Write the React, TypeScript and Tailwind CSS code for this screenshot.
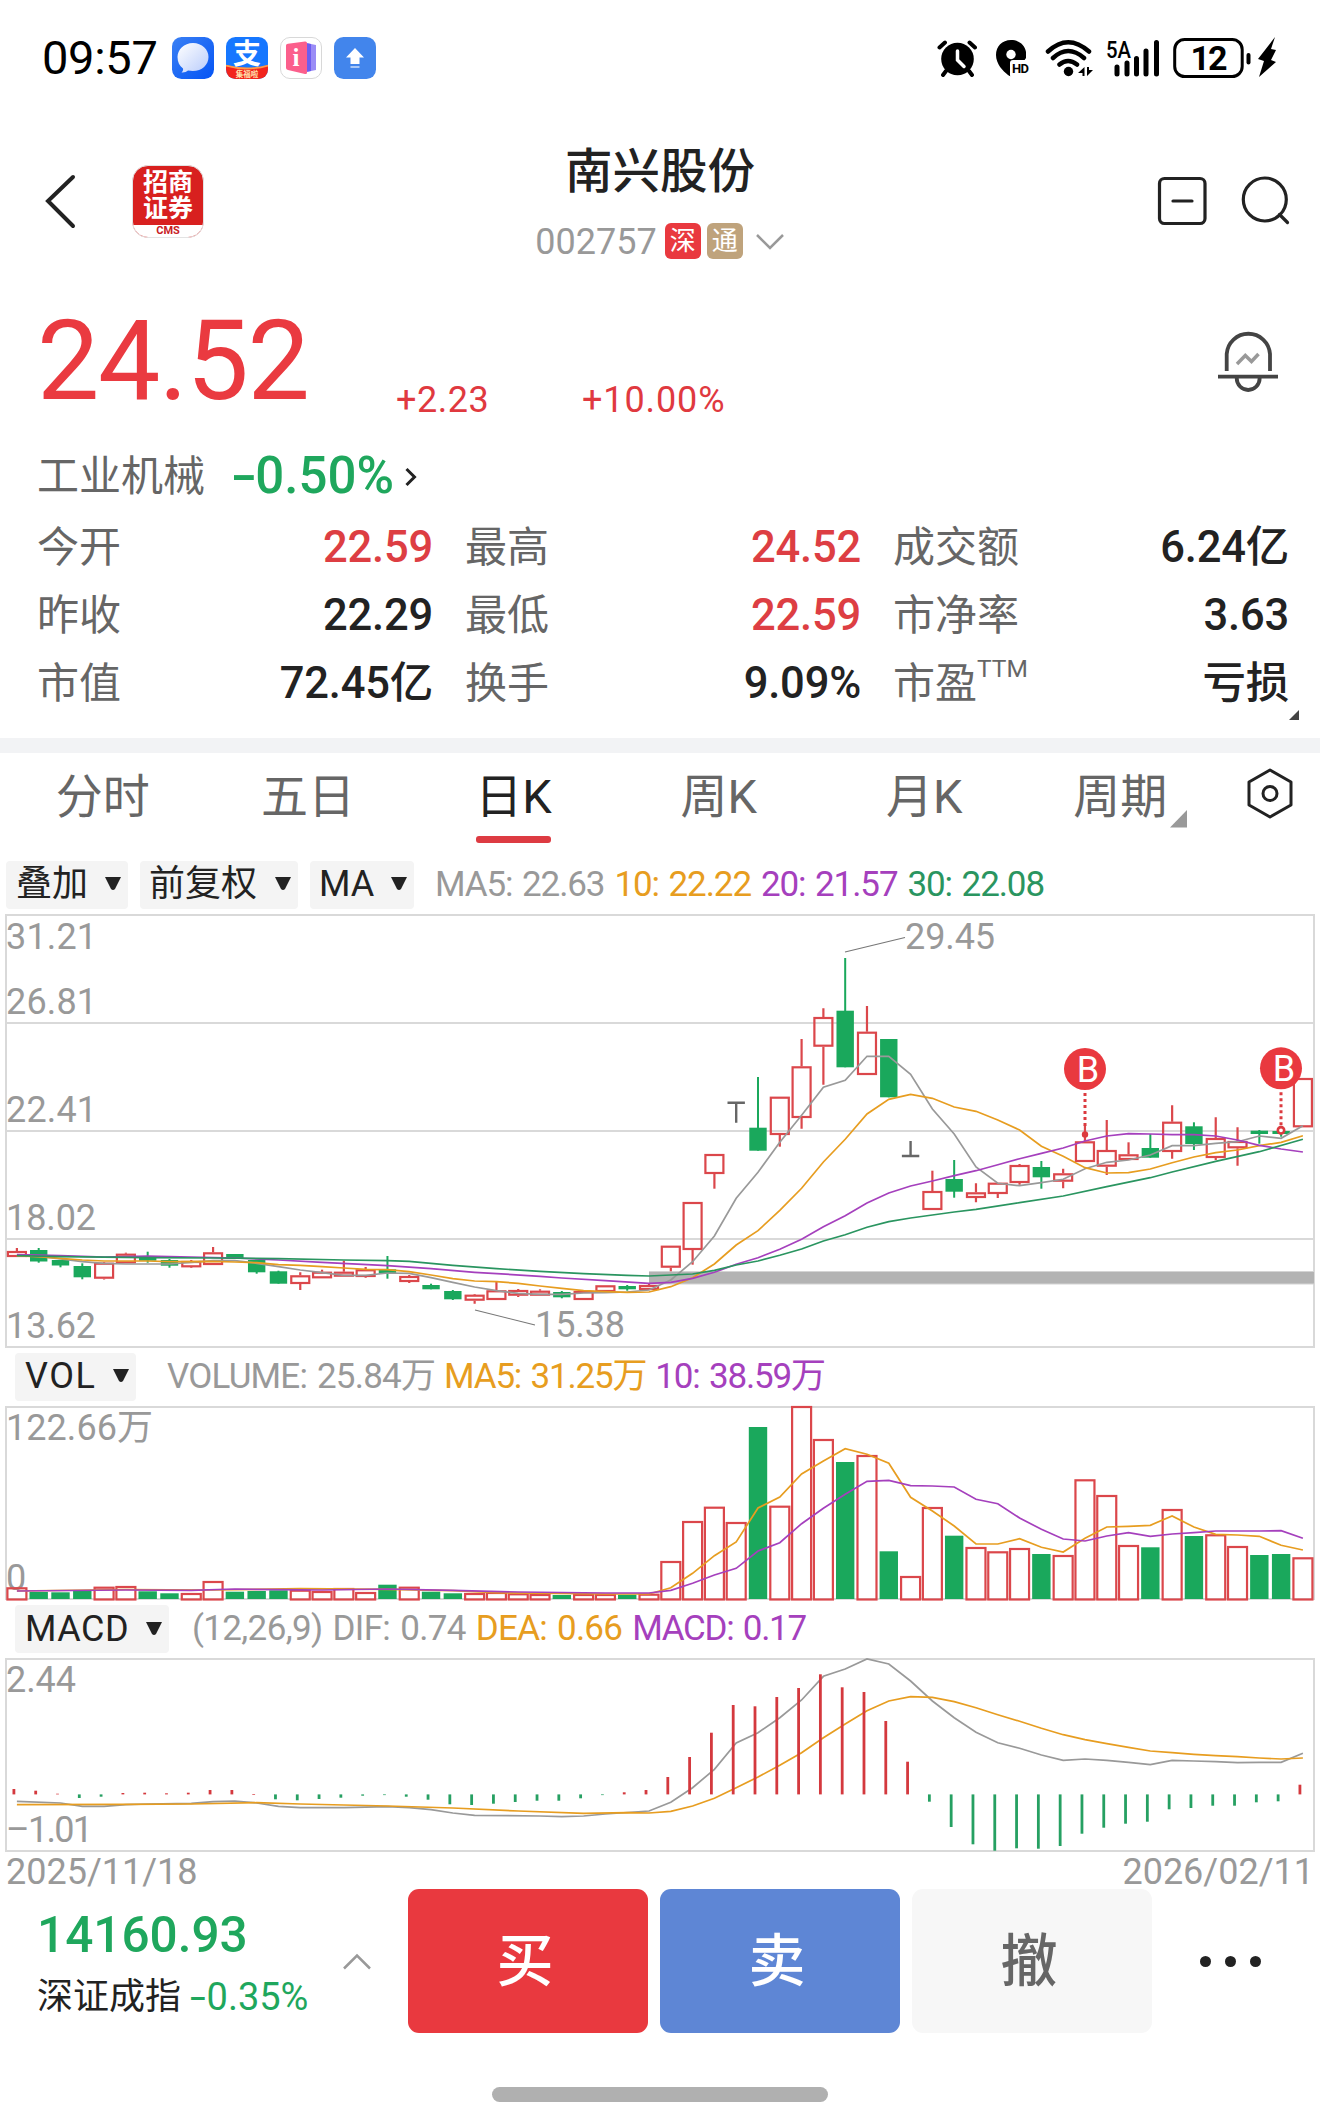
import type { ReactNode } from 'react'

type CandleKind = 'up' | 'down' | 'top' | 'bottom'

// [kind, high, body top, body bottom, low, volume top, macd]
type Day = [CandleKind, number, number, number, number, number, number]

const RED = '#db474b'
const GREEN = '#1aa85c'
const GRAY = '#999999'
const ORANGE = '#e79d20'
const PURPLE = '#a540bd'
const DARK_GREEN = '#2a9560'
const GRID = '#d9d9d9'

const days: Day[] = [
    ['up', 1248, 1251, 1257, 1257, 1587.3, 1789],
    ['down', 1248, 1250, 1261.5, 1262.7, 1592, 1790.7],
    ['down', 1260, 1260, 1265.5, 1267.3, 1592.3, 1793.7],
    ['down', 1263.3, 1266, 1277.3, 1279.3, 1590, 1798],
    ['up', 1262, 1262.7, 1278.7, 1279.5, 1586.7, 1796.7],
    ['up', 1252.7, 1253.7, 1263.3, 1263.3, 1586, 1793],
    ['down', 1251.7, 1257.7, 1260.7, 1262.7, 1591.3, 1792.7],
    ['down', 1259, 1260, 1265.7, 1267.7, 1593.3, 1793.3],
    ['up', 1260, 1261, 1267.3, 1268, 1593, 1792.7],
    ['up', 1247, 1252.3, 1265, 1265, 1581, 1790],
    ['down', 1254, 1254, 1258.7, 1258.7, 1591.7, 1790],
    ['down', 1260, 1260, 1272.3, 1273.7, 1591, 1794],
    ['down', 1270.7, 1271.3, 1283.7, 1283.7, 1590.3, 1799.3],
    ['up', 1272.3, 1275.3, 1284, 1290, 1589.7, 1800.3],
    ['up', 1269.7, 1271.7, 1278.3, 1278.3, 1591, 1799],
    ['up', 1260.7, 1271.7, 1276.7, 1276.7, 1588, 1797.7],
    ['up', 1267, 1269.3, 1277, 1277.7, 1592, 1795.7],
    ['down', 1256, 1269.3, 1273.3, 1278.7, 1584.7, 1795],
    ['up', 1275, 1276, 1282, 1283, 1586.7, 1796.7],
    ['down', 1283.7, 1285, 1289.3, 1289.3, 1591.7, 1799.7],
    ['down', 1290, 1291, 1299.3, 1300, 1593.3, 1804.3],
    ['up', 1294, 1294.7, 1300.7, 1303.7, 1593, 1805],
    ['up', 1282, 1290.3, 1300, 1300, 1592, 1803.7],
    ['up', 1289, 1290, 1295.7, 1297, 1593.3, 1802],
    ['up', 1289.3, 1290.7, 1295.7, 1295.7, 1594, 1800.7],
    ['down', 1291, 1292, 1297.3, 1298.3, 1595, 1800.7],
    ['up', 1291, 1291, 1300, 1300, 1594, 1798.3],
    ['up', 1285.3, 1285.3, 1292, 1292, 1594, 1794.7],
    ['down', 1285, 1286, 1289.3, 1290.7, 1594.7, 1792.3],
    ['up', 1284, 1285, 1290, 1290, 1593.7, 1790],
    ['up', 1245.7, 1245.7, 1267.7, 1271.3, 1561, 1777],
    ['up', 1202, 1202, 1250, 1264.7, 1521, 1757],
    ['up', 1154, 1154, 1174, 1188.7, 1506.7, 1732.7],
    ['top', 1102.7, 1102.7, 1102.7, 1122.7, 1522, 1705],
    ['down', 1077, 1127.7, 1150.7, 1150.7, 1427, 1706.3],
    ['up', 1096.7, 1096.7, 1135, 1146.7, 1505.7, 1697],
    ['up', 1039, 1066.3, 1118, 1128.7, 1406, 1688],
    ['up', 1008.3, 1017, 1046.7, 1084.7, 1439, 1674.3],
    ['down', 958, 1010.7, 1067.3, 1067.3, 1462, 1687.3],
    ['up', 1006, 1031.7, 1075, 1075, 1455, 1692],
    ['down', 1039, 1039, 1097.3, 1097.3, 1551.3, 1721],
    ['bottom', 1141, 1156, 1156, 1156, 1576, 1761.7],
    ['up', 1170.7, 1191, 1210, 1210, 1507, 1801.7],
    ['down', 1160, 1179, 1191.7, 1197.7, 1535.7, 1827],
    ['up', 1183.3, 1192.3, 1198, 1202.3, 1547, 1844.3],
    ['up', 1182.7, 1182.7, 1194, 1198, 1551.3, 1850.7],
    ['up', 1164, 1165, 1183, 1184.7, 1548, 1848.3],
    ['down', 1161, 1167, 1177.3, 1188.7, 1554, 1848.7],
    ['up', 1168.7, 1173.3, 1181.7, 1188.3, 1555, 1846],
    ['up', 1125, 1141.3, 1162, 1162, 1479.3, 1833.7],
    ['up', 1120, 1150, 1166.7, 1175, 1495, 1827.7],
    ['up', 1142.3, 1154.3, 1160, 1160, 1545, 1823.7],
    ['down', 1134, 1148, 1157.7, 1157.7, 1547.3, 1821.7],
    ['up', 1105.3, 1121.7, 1152, 1158.7, 1509, 1809.3],
    ['down', 1122.3, 1126.3, 1144, 1150, 1536, 1808],
    ['up', 1117.3, 1138, 1158, 1160, 1534.3, 1805.7],
    ['up', 1127.3, 1141, 1148.3, 1165.7, 1546, 1805.7],
    ['down', 1130, 1130.7, 1134, 1143.7, 1555, 1802.3],
    ['down', 1131, 1131, 1134, 1136.7, 1554, 1801.3],
    ['up', 1078, 1078, 1127.3, 1127.3, 1557.3, 1784.7],
]

const dayX = (i: number) => 16.9 + i * 21.797

// each line is "index:y" pairs, days between two pairs are interpolated by the polyline
const toPoints = (line: string) =>
    line
        .trim()
        .split(/\s+/)
        .map((pair) => {
            const [i, y] = pair.split(':').map(Number)
            return `${dayX(i).toFixed(1)},${y}`
        })
        .join(' ')

const ma5 = `0:1255.3 1:1256.3 2:1259 3:1261.7 4:1263.3 5:1264 7:1264 8:1262.3 9:1260.7 10:1260.7 11:1263.3 12:1266.7
13:1270 14:1272.7 15:1275.3 16:1275.3 17:1273 18:1273.3 19:1277.7 20:1282.3 21:1287 22:1290.7 23:1293.3 24:1294.3 25:1294.3
26:1293 27:1292.7 28:1292 29:1290 30:1280 31:1261.7 32:1236 33:1198.3 34:1172.3 35:1142.3 36:1115.3 37:1087.3 38:1080.3
39:1056.3 40:1056.3 41:1074.3 42:1109 43:1134 44:1167 45:1183.3 46:1185.7 47:1182.7 48:1179.3 49:1168.7 50:1162.3 51:1160
52:1155 53:1145.7 54:1145.7 55:1143.3 56:1141.7 57:1136 58:1138.3 59:1125.7`
const ma10 = `0:1256 1:1256.7 2:1258.3 3:1260 4:1261 6:1261 7:1261.7 9:1261.3 10:1262 11:1262.7 12:1264.7 13:1265.3 14:1266.7
15:1268 16:1269.3 17:1269.7 18:1271.7 19:1275 20:1278.7 21:1281 22:1281.7 23:1283.3 24:1286 25:1288.3 26:1290.7 27:1291.7
28:1292.3 29:1292 30:1286.7 31:1277.7 32:1264 33:1245 34:1230.7 35:1210.3 36:1188.3 37:1162 38:1139.3 39:1114 40:1099.3
41:1094.3 42:1098.3 43:1107 44:1111.3 45:1120 46:1130 47:1146.3 48:1156.3 49:1167.7 50:1173 51:1172.7 52:1169 53:1162.7
54:1157 55:1152.7 56:1150 57:1145.7 58:1142.3 59:1135.7`
const ma20 = `0:1254.7 2:1255.7 4:1257 6:1256 8:1257 10:1258 12:1260 14:1262.3 17:1265.7 19:1268.7 21:1272.3 24:1276.3 25:1278
27:1280.7 29:1283.3 30:1282.3 31:1278.3 32:1272.3 33:1264.3 34:1257.7 35:1249.3 36:1239.3 37:1226.7 38:1215.7 39:1203
40:1193 41:1186 42:1181 43:1175.7 44:1170.7 45:1164.7 46:1158.7 47:1153.3 48:1148 49:1141 50:1136 51:1133.7 52:1134
53:1134.7 54:1134.7 55:1136 56:1140 57:1145.3 58:1149 59:1152`
const ma30 = `0:1255.7 2:1256.7 6:1257.7 9:1258 12:1258.7 15:1260 17:1260.7 18:1261.3 20:1265.3 22:1268.7 24:1271.3 26:1273.7
28:1275.3 29:1276 31:1274 32:1270.3 33:1265 34:1261 35:1255.3 36:1249 37:1241 38:1234.7 39:1227.3 40:1221.7 41:1218 42:1215
43:1212 44:1209.3 46:1202.7 48:1196 50:1186.7 52:1177.7 53:1172 55:1161.3 57:1151.7 59:1139.3`
const vol5 = `0:1591 5:1589.5 9:1590 13:1588.7 17:1589.3 20:1590.7 22:1592.7 27:1594 29:1594 30:1587.7 31:1573.3 32:1555.7
33:1542 34:1508 35:1497 36:1474 37:1461 38:1448.7 39:1454.3 40:1463.3 41:1497.3 42:1511 43:1526 44:1544 45:1544 46:1538.7
47:1547.3 48:1552 49:1538.3 50:1527 51:1526.3 52:1525.3 53:1516 54:1527 55:1534.3 56:1535 57:1536.3 58:1545.3 59:1550`
const vol10 = `0:1591 5:1590 8:1590.3 10:1589 12:1589.7 14:1590 17:1589 20:1590.3 23:1592 27:1593 29:1593 30:1590.3 31:1583.3
32:1575 33:1568.3 34:1551 35:1542.7 36:1523.7 37:1508.3 38:1494.3 39:1481.3 40:1480.3 41:1485.7 42:1486 43:1487 44:1499.3
45:1503.7 46:1518 47:1529.3 48:1539 49:1541 50:1536 51:1532.7 52:1536.3 53:1534 54:1532.7 55:1531 57:1531 58:1530.7 59:1538.3`
const dif = `0:1801.3 2:1803 3:1806.3 4:1806.3 5:1804.7 6:1804 8:1803.3 9:1801.7 10:1801 11:1803 12:1806.3 13:1807.7
15:1807.7 17:1806.7 18:1807.7 19:1809.7 20:1813 21:1815.3 24:1816 25:1816.7 26:1816 27:1814 29:1811 30:1802.3 31:1787.7
32:1769.3 33:1743 34:1732.7 35:1717.7 36:1700 37:1676.3 38:1669 39:1659 40:1664 41:1681 42:1701 43:1717.7 44:1732.3
45:1742.7 46:1748.3 47:1755 48:1760.3 49:1759 50:1760.3 51:1762.3 52:1764.7 53:1760.3 54:1761 55:1761.7 56:1762.7
57:1762.3 58:1762.3 59:1753.3`
const dea = `0:1804.7 5:1804.3 8:1804 11:1802.7 13:1804 17:1806 20:1808 23:1811 26:1813.3 28:1812.7 29:1813 30:1811.3
31:1806 32:1798.3 33:1787.7 34:1777 35:1765.3 36:1752.7 37:1737.7 38:1724 39:1710.7 40:1701 41:1696.7 42:1697.3 43:1701.7
44:1707.7 45:1714.7 46:1721.3 47:1728.3 48:1734.7 49:1739.7 50:1743.7 51:1747.3 52:1751 53:1752.7 54:1754.3 55:1755.7
56:1756.7 57:1758 58:1759 59:1758`

function Line({ data, color }: { data: string; color: string }) {
    return <polyline points={toPoints(data)} fill="none" stroke={color} strokeWidth="1.7" />
}

function Label({ x, y, width, children }: { x: number; y: number; width: number; children: ReactNode }) {
    return (
        <text x={x} y={y} textLength={width} fontSize="36" fill={GRAY}>
            {children}
        </text>
    )
}

function Candle({ day, x }: { day: Day; x: number }) {
    const [kind, high, top, bottom, low] = day
    if (kind === 'top' || kind === 'bottom') {
        return <path d={`M${x - 8.7} ${top}h17.4M${x} ${high}V${low}`} stroke="#666" strokeWidth="2.4" fill="none" />
    }
    if (kind === 'down') {
        return (
            <g fill={GREEN}>
                <rect x={x - 1} y={high} width="2" height={low - high} />
                <rect x={x - 8.7} y={top} width="17.4" height={bottom - top} />
            </g>
        )
    }
    return (
        <g stroke={RED} strokeWidth="2.2" fill="none">
            <path d={`M${x} ${high}V${top}M${x} ${bottom}V${low}`} />
            <rect x={x - 9} y={top + 1} width="18" height={bottom - top - 2} />
        </g>
    )
}

function BuyMark({ x, y }: { x: number; y: number }) {
    return (
        <g>
            <path d={`M${x} ${y + 24}V1126`} stroke="#dc3a3f" strokeWidth="3" strokeDasharray="3 3" />
            <circle cx={x} cy={y} r="21" fill="#e9393f" />
            <text x={x + 3} y={y + 13} fontSize="36" fill="#fff" textAnchor="middle">B</text>
        </g>
    )
}

function PriceChart() {
    return (
        <svg className="block" width="1320" height="434" viewBox="0 914 1320 434">
            <g stroke={GRID} strokeWidth="2" fill="none">
                <rect x="6" y="915" width="1308" height="432" />
                <path d="M6 1023H1314M6 1131H1314M6 1239H1314" />
            </g>
            <rect x="649" y="1271" width="665" height="13.5" fill="#d4d4d4" />
            <rect x="649" y="1272" width="665" height="11.5" fill="#b3b3b3" />
            <Label x={6} y={948.5} width={91}>31.21</Label>
            <Label x={6} y={1014} width={91}>26.81</Label>
            <Label x={6} y={1122} width={91}>22.41</Label>
            <Label x={6} y={1230} width={90}>18.02</Label>
            <Label x={6} y={1338} width={90}>13.62</Label>
            {days.map((day, i) => (
                <Candle key={i} day={day} x={dayX(i)} />
            ))}
            <Line data={ma5} color={GRAY} />
            <Line data={ma10} color={ORANGE} />
            <Line data={ma20} color={PURPLE} />
            <Line data={ma30} color={DARK_GREEN} />
            <path d="M845 952L905 937.5M475 1310L535 1325" stroke="#777" strokeWidth="1.2" />
            <Label x={905} y={949} width={90}>29.45</Label>
            <Label x={535} y={1337} width={90}>15.38</Label>
            <BuyMark x={1085} y={1069} />
            <circle cx="1085" cy="1134.5" r="3.2" fill="#dc3a3f" />
            <BuyMark x={1281} y={1068.3} />
            <circle cx="1281" cy="1130.3" r="3.2" fill="#fff" stroke="#dc3a3f" strokeWidth="2.6" />
        </svg>
    )
}

function VolumeChart() {
    return (
        <svg className="block" width="1320" height="196" viewBox="0 1405 1320 196">
            <rect x="6" y="1407" width="1308" height="192" stroke={GRID} strokeWidth="2" fill="none" />
            <Label x={6} y={1440} width={147}>122.66万</Label>
            <Label x={6} y={1590} width={20}>0</Label>
            {days.map((day, i) =>
                day[0] === 'down' ? (
                    <rect key={i} x={dayX(i) - 9.2} y={day[5]} width="18.4" height={1599 - day[5]} fill={GREEN} />
                ) : (
                    <rect
                        key={i}
                        x={dayX(i) - 9.5}
                        y={day[5] + 1}
                        width="19"
                        height={1598.5 - day[5]}
                        stroke={RED}
                        strokeWidth="2.2"
                        fill="none"
                    />
                ),
            )}
            <Line data={vol5} color={ORANGE} />
            <Line data={vol10} color={PURPLE} />
        </svg>
    )
}

function MacdChart() {
    return (
        <svg className="block" width="1320" height="195" viewBox="0 1657 1320 195">
            <rect x="6" y="1659" width="1308" height="192" stroke={GRID} strokeWidth="2" fill="none" />
            <Label x={6} y={1692} width={70}>2.44</Label>
            <Label x={6} y={1842} width={87}>–1.01</Label>
            <Line data={dif} color={GRAY} />
            <Line data={dea} color={ORANGE} />
            {days.map((day, i) => (
                <rect
                    key={i}
                    x={dayX(i) - 4.4}
                    y={Math.min(day[6], 1794.4)}
                    width="2.8"
                    height={Math.max(Math.abs(day[6] - 1794.4), 0.7)}
                    fill={day[6] < 1794.4 ? '#d4393e' : '#26a062'}
                />
            ))}
        </svg>
    )
}

function Pill({ className, children }: { className: string; children: ReactNode }) {
    return (
        <button className={`flex h-12 items-center justify-between rounded-[4px] bg-[#f4f4f4] pr-[7px] text-[36px] leading-none text-[#222] ${className}`}>
            <span className="-mt-px whitespace-nowrap">{children}</span>
            <svg className="-mt-[2px]" width="16" height="13" viewBox="0 0 16 13">
                <path d="M0 0H16L10 12Q8 14 6 12Z" fill="#222" />
            </svg>
        </button>
    )
}

function Stat({ label, value, sup, red }: { label: string; value: string; sup?: string; red?: boolean }) {
    return (
        <div className="flex h-[68px] items-center justify-between text-[42px] leading-none">
            <span className="flex text-[#666]">
                {label}
                {sup && <span className="-mt-[6px] text-[24.5px] leading-none">{sup}</span>}
            </span>
            <span className={`text-[43.5px] font-medium tracking-[-0.2px] ${red ? 'text-[#dd3e43]' : 'text-[#222]'}`}>{value}</span>
        </div>
    )
}

function AppIcons() {
    return (
        <div className="ml-[14px] flex gap-3">
            <svg width="42" height="42" viewBox="0 0 42 42">
                <defs>
                    <linearGradient id="msg" x1="0" y1="0" x2="1" y2="1">
                        <stop offset="0" stopColor="#3a80f4" />
                        <stop offset="1" stopColor="#0454f5" />
                    </linearGradient>
                    <linearGradient id="bubble" x1="0" y1="0" x2="1" y2="1">
                        <stop offset="0" stopColor="#fff" />
                        <stop offset="1" stopColor="#b9ccfb" />
                    </linearGradient>
                </defs>
                <rect width="42" height="42" rx="9.5" fill="url(#msg)" />
                <path d="M21 6C12 6 5.5 12.500 5.500 20C5.500 25 7.500 29 11 31.500C11.500 33 10.500 34.500 9.500 35.500C12 35.800 14.500 35 16 33.600C28 36 36.500 29 36.500 20C36.500 12.500 30 6 21 6Z" fill="url(#bubble)" />
            </svg>
            <svg width="42" height="42" viewBox="0 0 42 42">
                <clipPath id="pay"><rect width="42" height="42" rx="9.500" /></clipPath>
                <g clipPath="url(#pay)">
                    <rect width="42" height="42" fill="#1677ff" />
                    <path d="M0 28Q21 34 42 28V42H0Z" fill="#f2231c" />
                    <path d="M0 28.500Q21 34.500 42 28.500" stroke="#ff9b4a" strokeWidth="1.800" fill="none" />
                </g>
                <text x="21" y="26.500" fontSize="28" fontWeight="700" fill="#fff" textAnchor="middle">支</text>
                <text x="21" y="40" fontSize="7.500" fontWeight="700" fill="#ffe3b0" textAnchor="middle">集福啦</text>
            </svg>
            <svg width="42" height="42" viewBox="0 0 42 42">
                <rect x="0.500" y="0.500" width="41" height="41" rx="9.500" fill="#fff" stroke="#d8d8d8" />
                <path d="M26 6L36 8V33L26 35Z" fill="#9a8cf6" />
                <path d="M26 6L31 7V34L26 35Z" fill="#6d5df0" />
                <path d="M6 8.500Q6 7 8 6.700L25 4.500Q27 4.300 27 6V35.500Q27 37.500 25 37L8 33Q6 32.500 6 31Z" fill="#fb5f8c" />
                <text x="16" y="29" fontFamily="Liberation Serif" fontSize="25" fontWeight="700" fill="#fff" textAnchor="middle">i</text>
            </svg>
            <svg width="42" height="42" viewBox="0 0 42 42">
                <rect width="42" height="42" rx="9.500" fill="#4285ec" />
                <path d="M21 11L30 20.500H25.500V27H16.500V20.500H12Z" fill="#fff" />
                <path d="M16.500 30H25.500" stroke="#a9c8f8" strokeWidth="2" />
            </svg>
        </div>
    )
}

function StatusIcons() {
    return (
        <div className="ml-auto flex items-center">
            <svg width="40" height="40" viewBox="937 38 40 40">
                <circle cx="957.500" cy="59" r="16.300" />
                <path d="M939.500 47.500L945 42.500M975 47.500L969.500 42.500M946 71L943 75M969 71L972 75" stroke="#000" strokeWidth="4" strokeLinecap="round" />
                <path d="M957.500 51V60L964 66.500" stroke="#fff" strokeWidth="3.500" fill="none" strokeLinecap="round" />
            </svg>
            <svg className="ml-[17px]" width="37" height="40" viewBox="994 38 37 40">
                <path d="M1011 40C1002 40 996 46.500 996 55C996 64 1003 71 1008 75Q1011 77.500 1014 75L1026 58V52C1025 45 1019 40 1011 40Z" />
                <circle cx="1011" cy="54.500" r="4.700" fill="#fff" />
                <rect x="1010" y="60" width="21" height="18" rx="3" fill="#fff" />
                <text x="1012" y="72.500" fontSize="13" fontWeight="700" textLength="17">HD</text>
            </svg>
            <svg className="ml-[13px]" width="50" height="40" viewBox="1044 38 50 40">
                <path d="M1048 51.500Q1068 33 1089 51.500M1053 58Q1068 44 1084 58M1059.500 64.500Q1068 57.500 1077 64.500" stroke="#000" strokeWidth="4.500" fill="none" strokeLinecap="round" />
                <circle cx="1068.500" cy="71.500" r="4.700" />
                <path d="M1084.500 67V76H1082.500V73L1078 73ZM1087 76V67H1089V70L1093 70Z" />
            </svg>
            <svg className="ml-[10px]" width="58" height="52" viewBox="1104 32 58 52">
                <text x="1106" y="57.500" fontSize="24" fontWeight="500" textLength="25" lengthAdjust="spacingAndGlyphs">5A</text>
                <path d="M1117 67V74M1127 63V74M1136.500 58.500V74M1146 51V74M1156.500 42.500V74" stroke="#000" strokeWidth="5" strokeLinecap="round" />
            </svg>
            <svg className="ml-[10px]" width="106" height="44" viewBox="1172 37 106 44">
                <rect x="1174.700" y="40.500" width="67.500" height="37" rx="10" fill="none" stroke="#000" strokeWidth="3" />
                <text x="1209" y="71" fontSize="34" fontWeight="700" textAnchor="middle" textLength="37">12</text>
                <rect x="1246.500" y="54" width="4" height="11.500" rx="2" />
                <path d="M1275 38L1258 60L1264 62L1259 78L1276 63L1271 61L1276 51L1271 50Z" />
            </svg>
        </div>
    )
}

function Header() {
    return (
        <header className="flex h-[170px] items-center justify-between pl-[44px] pr-[30px]">
            <div className="flex w-[220px] items-center">
                <svg width="32" height="56" viewBox="44 173 32 56">
                    <path d="M73 177L48 201L73 226" fill="none" stroke="#222" strokeWidth="4" strokeLinecap="round" />
                </svg>
                <div className="ml-[56px] flex h-[73px] w-[72px] flex-col items-center overflow-hidden rounded-[16px] border border-[#e3e3e3] bg-[#d8201f] pt-[4px] text-[25px] leading-[26px] font-bold text-white">
                    <span>招商</span>
                    <span>证券</span>
                    <span className="mt-[3px] w-full flex-1 bg-white text-center text-[11px] leading-[12px] text-[#c8201f]">CMS</span>
                </div>
            </div>
            <div className="flex h-full flex-col items-center pt-[26px]">
                <h1 className="h-[60px] text-[47.5px] leading-[60px] font-medium text-[#222]">南兴股份</h1>
                <div className="mt-[20px] flex h-[38px] items-center text-[36px] leading-none text-[#999]">
                    <span className="pt-[2px]">002757</span>
                    <span className="ml-[8px] h-9 w-9 rounded-[6px] bg-[#e9393f] text-center text-[26px] leading-9 text-white">深</span>
                    <span className="ml-[6px] h-9 w-9 rounded-[6px] bg-[#bfa37c] text-center text-[26px] leading-9 text-white">通</span>
                    <svg className="ml-[12px]" width="30" height="18" viewBox="0 0 30 18">
                        <path d="M2 3L15 16L28 3" fill="none" stroke="#999" strokeWidth="2.500" />
                    </svg>
                </div>
            </div>
            <div className="flex w-[234px] justify-end">
                <svg width="134" height="54" viewBox="1156 174 134 54" fill="none" stroke="#222" strokeWidth="3.200" strokeLinecap="round">
                    <rect x="1159.500" y="178.500" width="45.500" height="45" rx="5" />
                    <path d="M1173 201H1192" />
                    <circle cx="1264.800" cy="199.500" r="21.500" />
                    <path d="M1279.500 214.500L1287.500 222.500" />
                </svg>
            </div>
        </header>
    )
}

function Quote() {
    return (
        <section className="pr-[31px] pl-[37px]">
            <div className="flex h-[155px] items-start text-[#e0393f]">
                <span className="mt-[19px] w-[359px] text-[111px] leading-[112px] tracking-[-1.500px] text-[#ea3a40]">24.52</span>
                <span className="mt-[96px] w-[186px] text-[36px] leading-[36px] tracking-[0.500px]">+2.23</span>
                <span className="mt-[96px] text-[36px] leading-[36px] tracking-[0.900px]">+10.00%</span>
                <svg className="mt-[42px] ml-auto mr-[8px]" width="66" height="66" viewBox="1215 328 66 66" fill="none" stroke="#444" strokeWidth="3.800">
                    <path d="M1226.700 371V354A21.700 21.700 0 0 1 1270 354V371M1218 376.700H1278M1236.700 378A11.500 12 0 0 0 1259.700 378" />
                    <path d="M1237 364L1245.300 355.500L1251.500 361.500L1258.500 354" stroke="#999" strokeWidth="3.500" />
                </svg>
            </div>
            <div className="flex h-[71px] items-center text-[42px] leading-none text-[#666]">
                工业机械
                <span className="ml-[26px] -mt-[2px] text-[51px] font-medium text-[#1fa75d]">
                    <span className="mr-[7px] inline-block origin-left scale-x-150">-</span>0.50%
                </span>
                <svg className="ml-[10px]" width="14" height="20" viewBox="0 0 14 20">
                    <path d="M2.500 2L10.500 10L2.500 18" fill="none" stroke="#222" strokeWidth="3" />
                </svg>
            </div>
            <div className="grid grid-cols-[396px_396px_396px] gap-x-[32px] pt-[2px]">
                <Stat label="今开" value="22.59" red />
                <Stat label="最高" value="24.52" red />
                <Stat label="成交额" value="6.24亿" />
                <Stat label="昨收" value="22.29" />
                <Stat label="最低" value="22.59" red />
                <Stat label="市净率" value="3.63" />
                <Stat label="市值" value="72.45亿" />
                <Stat label="换手" value="9.09%" />
                <Stat label="市盈" sup="TTM" value="亏损" />
            </div>
            <div className="-mr-[10px] flex h-[20px] justify-end">
                <svg className="-mt-[8px]" width="10" height="10" viewBox="0 0 10 10">
                    <path d="M10 0V10H0Z" fill="#444" />
                </svg>
            </div>
        </section>
    )
}

const tabs = ['分时', '五日', '日K', '周K', '月K', '周期']

function Tabs() {
    return (
        <nav className="flex h-[102px] text-[47px] leading-none text-[#666]">
            {tabs.map((tab) => (
                <div key={tab} className="relative flex h-[86px] w-[205.400px] items-center justify-center">
                    <span className={tab === '日K' ? 'text-[#222]' : tab === '周期' ? 'pr-[19px]' : ''}>{tab}</span>
                    {tab === '日K' && <span className="absolute top-[83px] h-[7px] w-[75px] rounded-[3px] bg-[#dd3b42]" />}
                    {tab === '周期' && (
                        <svg className="absolute top-[57px] right-[45px]" width="17" height="18" viewBox="0 0 17 18">
                            <path d="M17 0V17.500H0Z" fill="#999" />
                        </svg>
                    )}
                </div>
            ))}
            <svg className="mt-[13px] ml-[13px]" width="50" height="54" viewBox="1245 766 50 54" fill="none" stroke="#222" strokeWidth="3">
                <path d="M1270 770L1291 782V805L1270 817L1249 805V782Z" strokeLinejoin="round" />
                <circle cx="1270" cy="793.500" r="7" />
            </svg>
        </nav>
    )
}

function Footer() {
    return (
        <footer className="flex h-[144px]">
            <div className="flex w-[408px] items-center pl-[37px]">
                <div className="w-[306px] pt-[10px]">
                    <div className="text-[49.5px] leading-[60px] font-medium text-[#1fa75d]">14160.93</div>
                    <div className="mt-[2px] flex text-[36px] leading-[60px] text-[#222]">
                        深证成指
                        <span className="ml-[9px] text-[38px] text-[#1fa75d]">
                            <span className="mr-[6px] inline-block origin-left scale-x-150">-</span>0.35%
                        </span>
                    </div>
                </div>
                <svg width="28" height="17" viewBox="0 0 28 17">
                    <path d="M1 15.500L14 2.500L27 15.500" fill="none" stroke="#999" strokeWidth="2.500" />
                </svg>
            </div>
            <div className="flex gap-3 text-[57px] leading-none font-medium">
                <button className="w-[240px] rounded-[11px] bg-[#e9393f] pr-[6px] text-white">买</button>
                <button className="w-[240px] rounded-[11px] bg-[#5e86d5] pr-[6px] text-white">卖</button>
                <button className="w-[240px] rounded-[11px] bg-[#f7f7f7] pr-[6px] text-[#666]">撤</button>
            </div>
            <div className="ml-[48px] flex items-center gap-[14px]">
                <span className="h-[11px] w-[11px] rounded-full bg-[#222]" />
                <span className="h-[11px] w-[11px] rounded-full bg-[#222]" />
                <span className="h-[11px] w-[11px] rounded-full bg-[#222]" />
            </div>
        </footer>
    )
}

export default function App() {
    return (
        <div className="h-[2120px] w-[1320px] overflow-hidden bg-white font-['Roboto','Noto_Sans_CJK_SC',sans-serif]">
            <div className="flex h-[116px] items-center pl-[42px] pr-[42px]">
                <span className="-mt-[1px] text-[47px] leading-none tracking-[-0.300px] text-black">09:57</span>
                <AppIcons />
                <StatusIcons />
            </div>
            <Header />
            <Quote />
            <div className="h-[15px] bg-[#f2f3f5]" />
            <Tabs />
            <div className="flex h-[59px] items-center pl-[6px]">
                <Pill className="w-[122px] pl-[10px]">叠加</Pill>
                <Pill className="ml-3 w-[158px] pl-[9px]">前复权</Pill>
                <Pill className="ml-3 w-[104px] pl-[9px]">MA</Pill>
                <div className="-mt-[1px] ml-[21px] flex gap-[10px] text-[35px] leading-none tracking-[-1.100px] whitespace-nowrap [word-spacing:2px]">
                    <span className="text-[#999]">MA5: 22.63</span>
                    <span className="text-[#e79d20]">10: 22.22</span>
                    <span className="text-[#a540bd]">20: 21.57</span>
                    <span className="text-[#2a9560]">30: 22.08</span>
                </div>
            </div>
            <PriceChart />
            <div className="flex h-[57px] items-center pl-[15px]">
                <Pill className="w-[121px] pl-[10px] tracking-[1.500px]">VOL</Pill>
                <div className="-mt-[1px] ml-[31px] flex gap-[9px] text-[35px] leading-none tracking-[-1.200px] whitespace-nowrap [word-spacing:2px]">
                    <span className="tracking-[-0.800px] text-[#999]">VOLUME: 25.84万</span>
                    <span className="text-[#e79d20]">MA5: 31.25万</span>
                    <span className="text-[#a540bd]">10: 38.59万</span>
                </div>
            </div>
            <VolumeChart />
            <div className="flex h-[56px] items-center pl-[15px]">
                <Pill className="w-[154px] pl-[10px] tracking-[0.500px]">MACD</Pill>
                <div className="-mt-[1px] ml-[23px] flex gap-[10px] text-[35px] leading-none tracking-[-1.300px] whitespace-nowrap [word-spacing:2px]">
                    <span className="tracking-[-0.650px] text-[#999]">(12,26,9) DIF: 0.74</span>
                    <span className="tracking-[-0.750px] text-[#e79d20]">DEA: 0.66</span>
                    <span className="text-[#a540bd]">MACD: 0.17</span>
                </div>
            </div>
            <MacdChart />
            <div className="flex h-[37px] justify-between pr-[6px] pl-[6px] text-[36px] leading-[40px] text-[#999]">
                <span>2025/11/18</span>
                <span>2026/02/11</span>
            </div>
            <Footer />
            <div className="mx-auto mt-[54px] h-[15px] w-[336px] rounded-full bg-[#b0b0b0]" />
        </div>
    )
}
